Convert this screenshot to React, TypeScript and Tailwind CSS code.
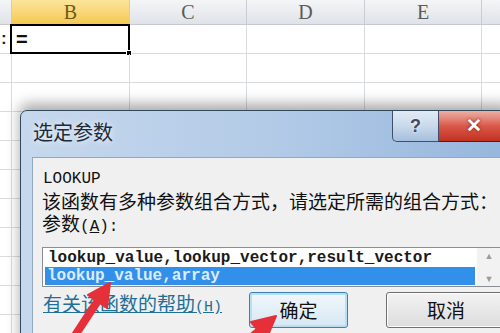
const COLS: { key: string; w: number }[] = [
  { key: 'A', w: 12 },
  { key: 'B', w: 118 },
  { key: 'C', w: 117 },
  { key: 'D', w: 118 },
  { key: 'E', w: 117 },
  { key: 'F', w: 60 },
]

const ROWS = [1, 2, 3, 4, 5, 6, 7, 8, 9, 10, 11]

const CJK = 'font-["Noto_Sans_CJK_SC",sans-serif]'

function Sheet() {
  return (
    <div className="flex flex-col">
      <div className="flex h-[25px] border-b border-[#c6cad0]">
        {COLS.map((c) => (
          <div
            key={c.key}
            style={{ width: c.w }}
            className={[
              'flex flex-none items-center justify-center border-r border-[#c9cdd3] font-["Liberation_Serif",serif] text-[20px] leading-none',
              c.key === 'B'
                ? 'bg-linear-to-b from-[#fbe59a] to-[#f4c94e] text-[#6d5a1c]'
                : 'bg-linear-to-b from-[#f4f5f7] to-[#dfe3e8] text-[#5a5a5a]',
            ].join(' ')}
          >
            {c.key === 'A' || c.key === 'F' ? '' : c.key}
          </div>
        ))}
      </div>
      {ROWS.map((r) => (
        <div key={r} className="flex h-[29px] border-b border-[#d9dcdf]">
          {COLS.map((c) => {
            const sel = r === 1 && c.key === 'B'
            return (
              <div key={c.key} style={{ width: c.w }} className="relative flex flex-none items-center border-r border-[#d9dcdf]">
                {r === 1 && c.key === 'A' && (
                  <span className="pl-[1px] font-['Liberation_Sans',sans-serif] text-[17px] font-bold text-[#222]">:</span>
                )}
                {sel && (
                  <>
                    <span className="pl-[4px] font-['Liberation_Sans',sans-serif] text-[20px] font-bold text-[#111]">=</span>
                    <div className="absolute -top-[1px] -left-[2px] -right-[1px] -bottom-[1px] border-2 border-black" />
                    <div className="absolute -right-[3px] -bottom-[3px] w-[6px] h-[6px] bg-black border border-white" />
                  </>
                )}
              </div>
            )
          })}
        </div>
      ))}
    </div>
  )
}

function Arrows() {
  return (
    <svg className="absolute inset-0 pointer-events-none" width="500" height="333" viewBox="0 0 500 333">
      <g fill="#e5303a" stroke="#e5303a" strokeLinejoin="round">
        <line x1="72" y1="340" x2="99" y2="299" strokeWidth="8" />
        <polygon points="110,283 107,308 88,295" strokeWidth="2" />
        <line x1="238" y1="348" x2="259" y2="331" strokeWidth="8" />
        <polygon points="276,316 266,340 251,322" strokeWidth="2" />
      </g>
    </svg>
  )
}

function Dialog() {
  return (
    <div className="absolute left-[20px] top-[110px] w-[490px] h-[240px] flex flex-col rounded-tl-[7px] border border-[#34475c] bg-linear-to-r from-[#c6d8ed] via-[#b3cbe7] to-[#96b6dd] shadow-[0_-6px_14px_rgba(0,0,0,0.35)]">
      <div className="flex h-[46px] flex-none items-start">
        <div className={`${CJK} pl-[12px] pt-[8px] text-[20px] leading-[26px] text-[#1d2b3a] [text-shadow:0_0_6px_#ffffff]`}>选定参数</div>
        <div className="ml-auto flex">
          <div className="flex h-[31px] w-[47px] items-center justify-center rounded-bl-[5px] border border-t-0 border-[#3f5066] bg-linear-to-b from-[#e2ebf5] via-[#c9d9eb] to-[#a6bfdc] font-['Liberation_Sans',sans-serif] text-[18px] font-bold text-[#3b4c60] [text-shadow:0_0_3px_#ffffff]">
            ?
          </div>
          <div className="flex h-[31px] w-[70px] items-center justify-center border-b border-[#5a1a14] bg-linear-to-b from-[#eab0a6] via-[#d9584a] to-[#c2301f] font-['Liberation_Sans',sans-serif] text-[19px] font-bold text-white [text-shadow:0_0_3px_#7a1a10]">
            ✕
          </div>
        </div>
      </div>
      <div className="ml-[11px] flex flex-1 flex-col border-l border-t border-[#93a7bd] bg-[#f0f0f0] pt-[10px]">
        <div className="pl-[10px] font-['Liberation_Mono',monospace] text-[16px] leading-[22px] text-[#111]">LOOKUP</div>
        <div className={`${CJK} whitespace-nowrap pl-[9px] text-[19px] leading-[22px] text-[#111]`}>
          该函数有多种参数组合方式，请选定所需的组合方式：
        </div>
        <div className={`${CJK} pl-[9px] text-[19px] leading-[22px] text-[#111]`}>
          参数<span className="font-['Liberation_Mono',monospace] text-[16px]">(<span className="underline">A</span>):</span>
        </div>
        <div className="ml-[9px] mt-[9px] flex h-[40px] w-[460px] border border-[#8a8f96] bg-white">
          <div className="flex flex-1 flex-col pt-[1px] font-['Liberation_Mono',monospace] text-[16px] font-bold">
            <div className="h-[18px] whitespace-nowrap pl-[5px] leading-[18px] text-[#1a1a1a]">lookup_value,lookup_vector,result_vector</div>
            <div className="mx-[2px] h-[18px] whitespace-nowrap bg-[#3390ea] pl-[2px] leading-[18px] text-[#dcecff]">lookup_value,array</div>
          </div>
          <div className="flex w-[24px] flex-none flex-col items-center justify-between bg-[#f2f2f2] py-[3px] text-[9px] leading-none text-[#9a9a9a]">
            <span>▲</span>
            <span>▼</span>
          </div>
        </div>
        <div className="mt-[5px] flex items-start">
          <div className={`${CJK} w-[216px] flex-none pl-[10px] text-[19px] leading-[22px] text-[#1f6f98] underline`}>
            有关该函数的帮助<span className="font-['Liberation_Mono',monospace] text-[15px]">(H)</span>
          </div>
          <div className="flex h-[36px] w-[99px] flex-none items-center justify-center rounded-[3px] border border-[#3c7fb1] bg-linear-to-b from-[#f1f7fb] to-[#d6e8f3] shadow-[inset_0_0_0_2px_#b8e0f5]">
            <span className={`${CJK} text-[19px] text-[#111]`}>确定</span>
          </div>
          <div className="ml-[38px] flex h-[36px] w-[120px] flex-none items-center justify-center rounded-[3px] border border-[#707070] bg-linear-to-b from-[#f3f3f3] to-[#dcdcdc] shadow-[inset_0_0_0_1px_#fcfcfc]">
            <span className={`${CJK} text-[19px] text-[#111]`}>取消</span>
          </div>
        </div>
      </div>
    </div>
  )
}

export default function App() {
  return (
    <div className="relative h-[333px] w-[500px] overflow-hidden bg-white">
      <Sheet />
      <Dialog />
      <Arrows />
    </div>
  )
}
